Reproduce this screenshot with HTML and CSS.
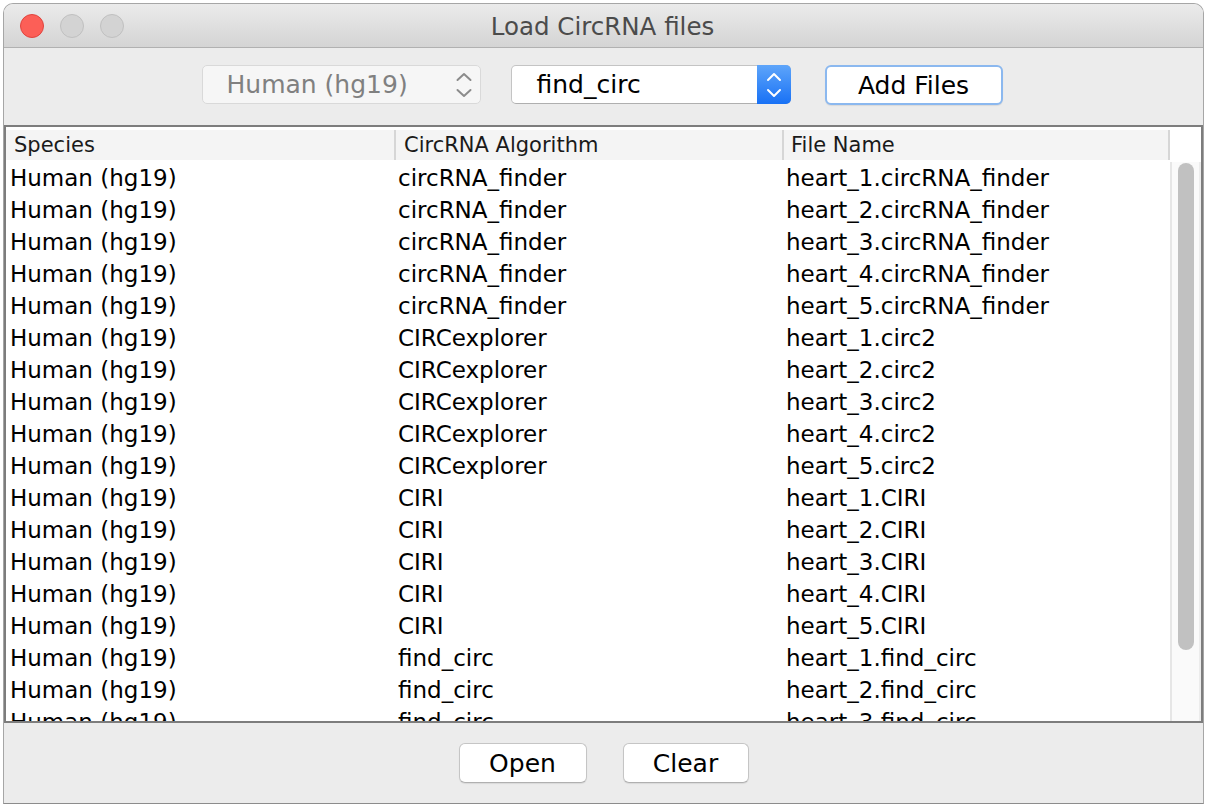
FILE: index.html
```html
<!DOCTYPE html>
<html>
<head>
<meta charset="utf-8">
<title>Load CircRNA files</title>
<link rel="stylesheet" href="styles.css">
</head>
<body>
<div class="window">
  <div class="titlebar">
    <div class="lights">
      <span class="light red"></span>
      <span class="light grey"></span>
      <span class="light grey"></span>
    </div>
    <div class="title">Load CircRNA files</div>
  </div>
  <div class="toolbar">
    <div class="combo disabled">
      <span class="combo-text">Human (hg19)</span>
      <span class="combo-arrows">
        <svg width="16" height="26" viewBox="0 0 16 26"><path d="M1.5 8 L8 2 L14.5 8 M1.5 18 L8 24 L14.5 18" fill="none" stroke="#8c8c8c" stroke-width="2" stroke-linecap="round" stroke-linejoin="round"/></svg>
      </span>
    </div>
    <div class="combo active">
      <span class="combo-text">find_circ</span>
      <span class="combo-arrows blue">
        <svg width="16" height="26" viewBox="0 0 16 26"><path d="M2 8 L8 2 L14 8 M2 18 L8 24 L14 18" fill="none" stroke="#ffffff" stroke-width="2" stroke-linecap="round" stroke-linejoin="round"/></svg>
      </span>
    </div>
    <button class="btn focus add">Add Files</button>
  </div>
  <div class="table-frame">
    <div class="thead">
      <div class="th c1">Species</div>
      <div class="th c2">CircRNA Algorithm</div>
      <div class="th c3">File Name</div>
      <div class="th-rest"></div>
    </div>
    <div class="tbody">
      <div class="rows">
        <div class="tr"><div class="td c1">Human (hg19)</div><div class="td c2">circRNA_finder</div><div class="td c3">heart_1.circRNA_finder</div></div>
        <div class="tr"><div class="td c1">Human (hg19)</div><div class="td c2">circRNA_finder</div><div class="td c3">heart_2.circRNA_finder</div></div>
        <div class="tr"><div class="td c1">Human (hg19)</div><div class="td c2">circRNA_finder</div><div class="td c3">heart_3.circRNA_finder</div></div>
        <div class="tr"><div class="td c1">Human (hg19)</div><div class="td c2">circRNA_finder</div><div class="td c3">heart_4.circRNA_finder</div></div>
        <div class="tr"><div class="td c1">Human (hg19)</div><div class="td c2">circRNA_finder</div><div class="td c3">heart_5.circRNA_finder</div></div>
        <div class="tr"><div class="td c1">Human (hg19)</div><div class="td c2">CIRCexplorer</div><div class="td c3">heart_1.circ2</div></div>
        <div class="tr"><div class="td c1">Human (hg19)</div><div class="td c2">CIRCexplorer</div><div class="td c3">heart_2.circ2</div></div>
        <div class="tr"><div class="td c1">Human (hg19)</div><div class="td c2">CIRCexplorer</div><div class="td c3">heart_3.circ2</div></div>
        <div class="tr"><div class="td c1">Human (hg19)</div><div class="td c2">CIRCexplorer</div><div class="td c3">heart_4.circ2</div></div>
        <div class="tr"><div class="td c1">Human (hg19)</div><div class="td c2">CIRCexplorer</div><div class="td c3">heart_5.circ2</div></div>
        <div class="tr"><div class="td c1">Human (hg19)</div><div class="td c2">CIRI</div><div class="td c3">heart_1.CIRI</div></div>
        <div class="tr"><div class="td c1">Human (hg19)</div><div class="td c2">CIRI</div><div class="td c3">heart_2.CIRI</div></div>
        <div class="tr"><div class="td c1">Human (hg19)</div><div class="td c2">CIRI</div><div class="td c3">heart_3.CIRI</div></div>
        <div class="tr"><div class="td c1">Human (hg19)</div><div class="td c2">CIRI</div><div class="td c3">heart_4.CIRI</div></div>
        <div class="tr"><div class="td c1">Human (hg19)</div><div class="td c2">CIRI</div><div class="td c3">heart_5.CIRI</div></div>
        <div class="tr"><div class="td c1">Human (hg19)</div><div class="td c2">find_circ</div><div class="td c3">heart_1.find_circ</div></div>
        <div class="tr"><div class="td c1">Human (hg19)</div><div class="td c2">find_circ</div><div class="td c3">heart_2.find_circ</div></div>
        <div class="tr"><div class="td c1">Human (hg19)</div><div class="td c2">find_circ</div><div class="td c3">heart_3.find_circ</div></div>
      </div>
      <div class="scrollbar"><div class="thumb"></div></div>
    </div>
  </div>
  <div class="footer">
    <button class="btn open">Open</button>
    <button class="btn clear">Clear</button>
  </div>
</div>
</body>
</html>
```
FILE: styles.css
```css
* { box-sizing: border-box; }
html, body { margin: 0; padding: 0; background: #ffffff; }
body { font-family: "DejaVu Sans", "Liberation Sans", sans-serif; }

.window {
  margin: 3px 0 0 3px;
  width: 1201px;
  height: 801px;
  border: 1px solid #a6a6a6;
  border-bottom-color: #8c8c8c;
  border-radius: 10px 10px 0 0;
  background: #ececec;
  display: flex;
  flex-direction: column;
  overflow: hidden;
}

.titlebar {
  height: 44px;
  flex: none;
  background: linear-gradient(#ebebeb, #d4d4d4);
  border-bottom: 1px solid #b1b1b1;
  display: flex;
  align-items: center;
  position: relative;
}
.lights { display: flex; gap: 16px; padding-left: 16px; }
.light {
  width: 24px; height: 24px; border-radius: 50%;
  display: block;
}
.light.red { background: #fc5f57; border: 1px solid #e0443e; }
.light.grey { background: #d3d3d3; border: 1px solid #c0c0c0; }
.title {
  position: absolute; left: 0; right: 0; top: 0; bottom: 0;
  display: flex; align-items: center; justify-content: center;
  font-size: 24.5px; color: #4b4b4b;
  padding-top: 1px;
  padding-right: 2px;
}

.toolbar {
  height: 77px;
  flex: none;
  display: flex;
  align-items: flex-start;
  justify-content: center;
  padding-top: 17px;
  padding-right: 3px;
}
.combo {
  height: 39px;
  border-radius: 5px;
  display: flex; align-items: center;
  font-size: 25px;
  position: relative;
}
.combo.disabled {
  width: 279px;
  background: #f6f6f6;
  border: 1px solid #d9d9d9;
  color: #808080;
}
.combo.active {
  width: 280px;
  margin-left: 30px;
  background: #ffffff;
  border: 1px solid #c4c4c4;
  border-bottom-color: #afafaf;
  color: #000;
}
.combo-text { flex: 1; padding-left: 24px; }
.combo.active .combo-text { padding-left: 25px; }
.combo-arrows {
  height: 100%;
  display: flex; align-items: center;
}
.combo.disabled .combo-arrows { padding-right: 8px; justify-content: flex-end; }
.combo-arrows.blue {
  width: 34px;
  justify-content: center;
  background: linear-gradient(#5ea5fa, #1871f5);
  border-radius: 0 5px 5px 0;
  margin: -1px -1px -1px 0;
  height: 39px;
}

.btn {
  font-family: "DejaVu Sans", "Liberation Sans", sans-serif;
  font-size: 25px;
  color: #000;
  background: #ffffff;
  border: 1px solid #c5c5c5;
  border-bottom-color: #b0b0b0;
  border-radius: 6px;
  height: 40px;
  padding: 0;
  box-shadow: 0 1px 1px rgba(0,0,0,0.08);
}
.btn.add {
  width: 178px;
  margin-left: 34px;
  border: 2px solid #8bb8ef;
}

.table-frame {
  height: 598px;
  flex: none;
  border: 2px solid #7d7d7d;
  background: #ffffff;
  display: flex;
  flex-direction: column;
  overflow: hidden;
}
.thead {
  display: flex;
  height: 35px;
  flex: none;
  padding-top: 3px;
  font-size: 21px;
  color: #1a1a1a;
}
.th {
  background: #f4f4f4;
  border-right: 2px solid #d6d6d6;
  padding-left: 8px;
  display: flex; align-items: center;
  height: 30px;
}
.th.c1 { width: 390px; padding-left: 8px; }
.th.c2 { width: 388px; }
.th.c3 { width: 386px; padding-left: 7px; }
.th-rest { flex: 1; background: #fff; }

.tbody { flex: 1; display: flex; overflow: hidden; }
.rows { flex: 1; overflow: hidden; }
.tr { display: flex; height: 32px; align-items: center; font-size: 23px; color: #000; }
.td { white-space: nowrap; padding-left: 3px; }
.td.c1 { width: 389px; padding-left: 4px; }
.td.c2 { width: 388px; }
.td.c3 { width: 386px; }

.scrollbar {
  width: 31px;
  flex: none;
  background: #fafafa;
  border-left: 2px solid #e6e6e6;
  border-right: 2px solid #ececec;
  padding: 1px 0 0 6px;
}
.thumb {
  width: 16px;
  height: 487px;
  border-radius: 8px;
  background: #c1c1c1;
}

.footer {
  flex: 1;
  display: flex;
  justify-content: center;
  align-items: flex-start;
  padding-top: 20px;
  gap: 36px;
}
.btn.open { width: 128px; }
.btn.clear { width: 126px; }
```
